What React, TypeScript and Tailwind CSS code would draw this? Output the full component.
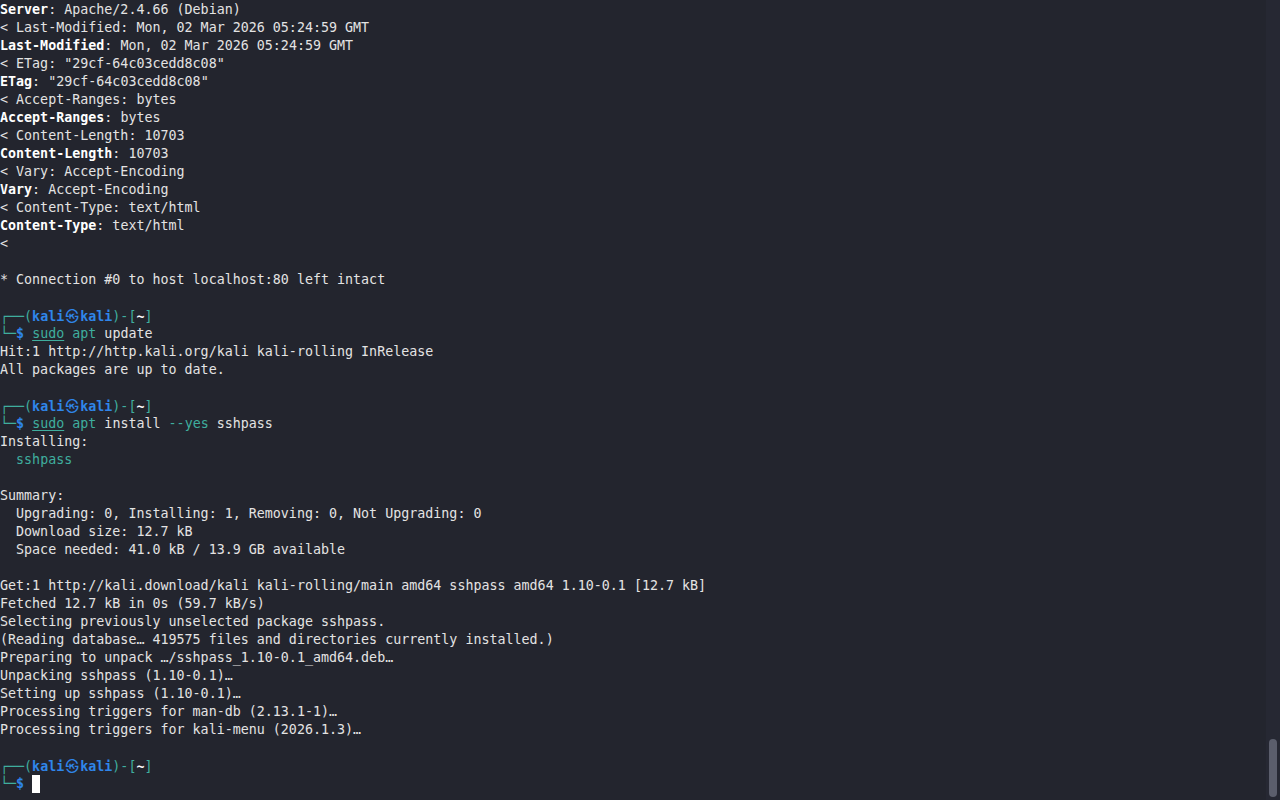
import React from 'react'

const teal = 'text-[#3fae9e]'
const blue = 'text-[#2f86ea] font-bold'

type Header = [string, string]

const headers: Header[] = [
  ['Last-Modified', 'Mon, 02 Mar 2026 05:24:59 GMT'],
  ['ETag', '"29cf-64c03cedd8c08"'],
  ['Accept-Ranges', 'bytes'],
  ['Content-Length', '10703'],
  ['Vary', 'Accept-Encoding'],
  ['Content-Type', 'text/html'],
]

const Line = ({ children }: { children?: React.ReactNode }) => (
  <div className="h-[18px] whitespace-pre">{children ?? ' '}</div>
)

const PromptTop = () => (
  <Line>
    <span className={teal}>┌──(</span>
    <span className={blue}>kali</span>
    <span className={`${blue} inline-block w-[16px] text-center`} style={{ fontFamily: '"Noto Sans CJK KR", "DejaVu Sans", sans-serif' }}>
      ㉿
    </span>
    <span className={blue}>kali</span>
    <span className={teal}>)-[</span>
    <span className="font-bold text-white">~</span>
    <span className={teal}>]</span>
  </Line>
)

const PromptCmd = ({ children }: { children?: React.ReactNode }) => (
  <Line>
    <span className={teal}>└─</span>
    <span className={blue}>$</span> {children}
  </Line>
)

const App = () => {
  return (
    <div
      className="flex h-[800px] w-[1280px] overflow-hidden bg-[#23252e] text-[#e3e3e3]"
      style={{ fontFamily: '"DejaVu Sans Mono", "Liberation Mono", monospace' }}
    >
      <div className="flex-1 pt-[1px] text-[13.33px] leading-[18px]">
        <Line>
          <span className="font-bold text-white">Server</span>: Apache/2.4.66 (Debian)
        </Line>
        {headers.map(([k, v]) => (
          <React.Fragment key={k}>
            <Line>{`< ${k}: ${v}`}</Line>
            <Line>
              <span className="font-bold text-white">{k}</span>: {v}
            </Line>
          </React.Fragment>
        ))}
        <Line>{'<'}</Line>
        <Line />
        <Line>* Connection #0 to host localhost:80 left intact</Line>
        <Line />
        <PromptTop />
        <PromptCmd>
          <span className={`${teal} underline underline-offset-2`}>sudo</span> <span className={teal}>apt</span> update
        </PromptCmd>
        <Line>Hit:1 http://http.kali.org/kali kali-rolling InRelease</Line>
        <Line>All packages are up to date.</Line>
        <Line />
        <PromptTop />
        <PromptCmd>
          <span className={`${teal} underline underline-offset-2`}>sudo</span> <span className={teal}>apt</span> install{' '}
          <span className={teal}>--yes</span> sshpass
        </PromptCmd>
        <Line>Installing:</Line>
        <Line>
          {'  '}
          <span className={teal}>sshpass</span>
        </Line>
        <Line />
        <Line>Summary:</Line>
        <Line>{'  Upgrading: 0, Installing: 1, Removing: 0, Not Upgrading: 0'}</Line>
        <Line>{'  Download size: 12.7 kB'}</Line>
        <Line>{'  Space needed: 41.0 kB / 13.9 GB available'}</Line>
        <Line />
        <Line>Get:1 http://kali.download/kali kali-rolling/main amd64 sshpass amd64 1.10-0.1 [12.7 kB]</Line>
        <Line>Fetched 12.7 kB in 0s (59.7 kB/s)</Line>
        <Line>Selecting previously unselected package sshpass.</Line>
        <Line>(Reading database… 419575 files and directories currently installed.)</Line>
        <Line>Preparing to unpack …/sshpass_1.10-0.1_amd64.deb…</Line>
        <Line>Unpacking sshpass (1.10-0.1)…</Line>
        <Line>Setting up sshpass (1.10-0.1)…</Line>
        <Line>Processing triggers for man-db (2.13.1-1)…</Line>
        <Line>Processing triggers for kali-menu (2026.1.3)…</Line>
        <Line />
        <PromptTop />
        <PromptCmd>
          <span className="inline-block h-[18px] w-[8px] bg-white align-top" />
        </PromptCmd>
      </div>
      <div className="flex w-[14px] flex-col justify-end bg-[#262833] pb-[3px] pl-[3px] pr-[3px]">
        <div className="h-[58px] w-[8px] rounded-full bg-[#5b5e6c]" />
      </div>
    </div>
  )
}

export default App
